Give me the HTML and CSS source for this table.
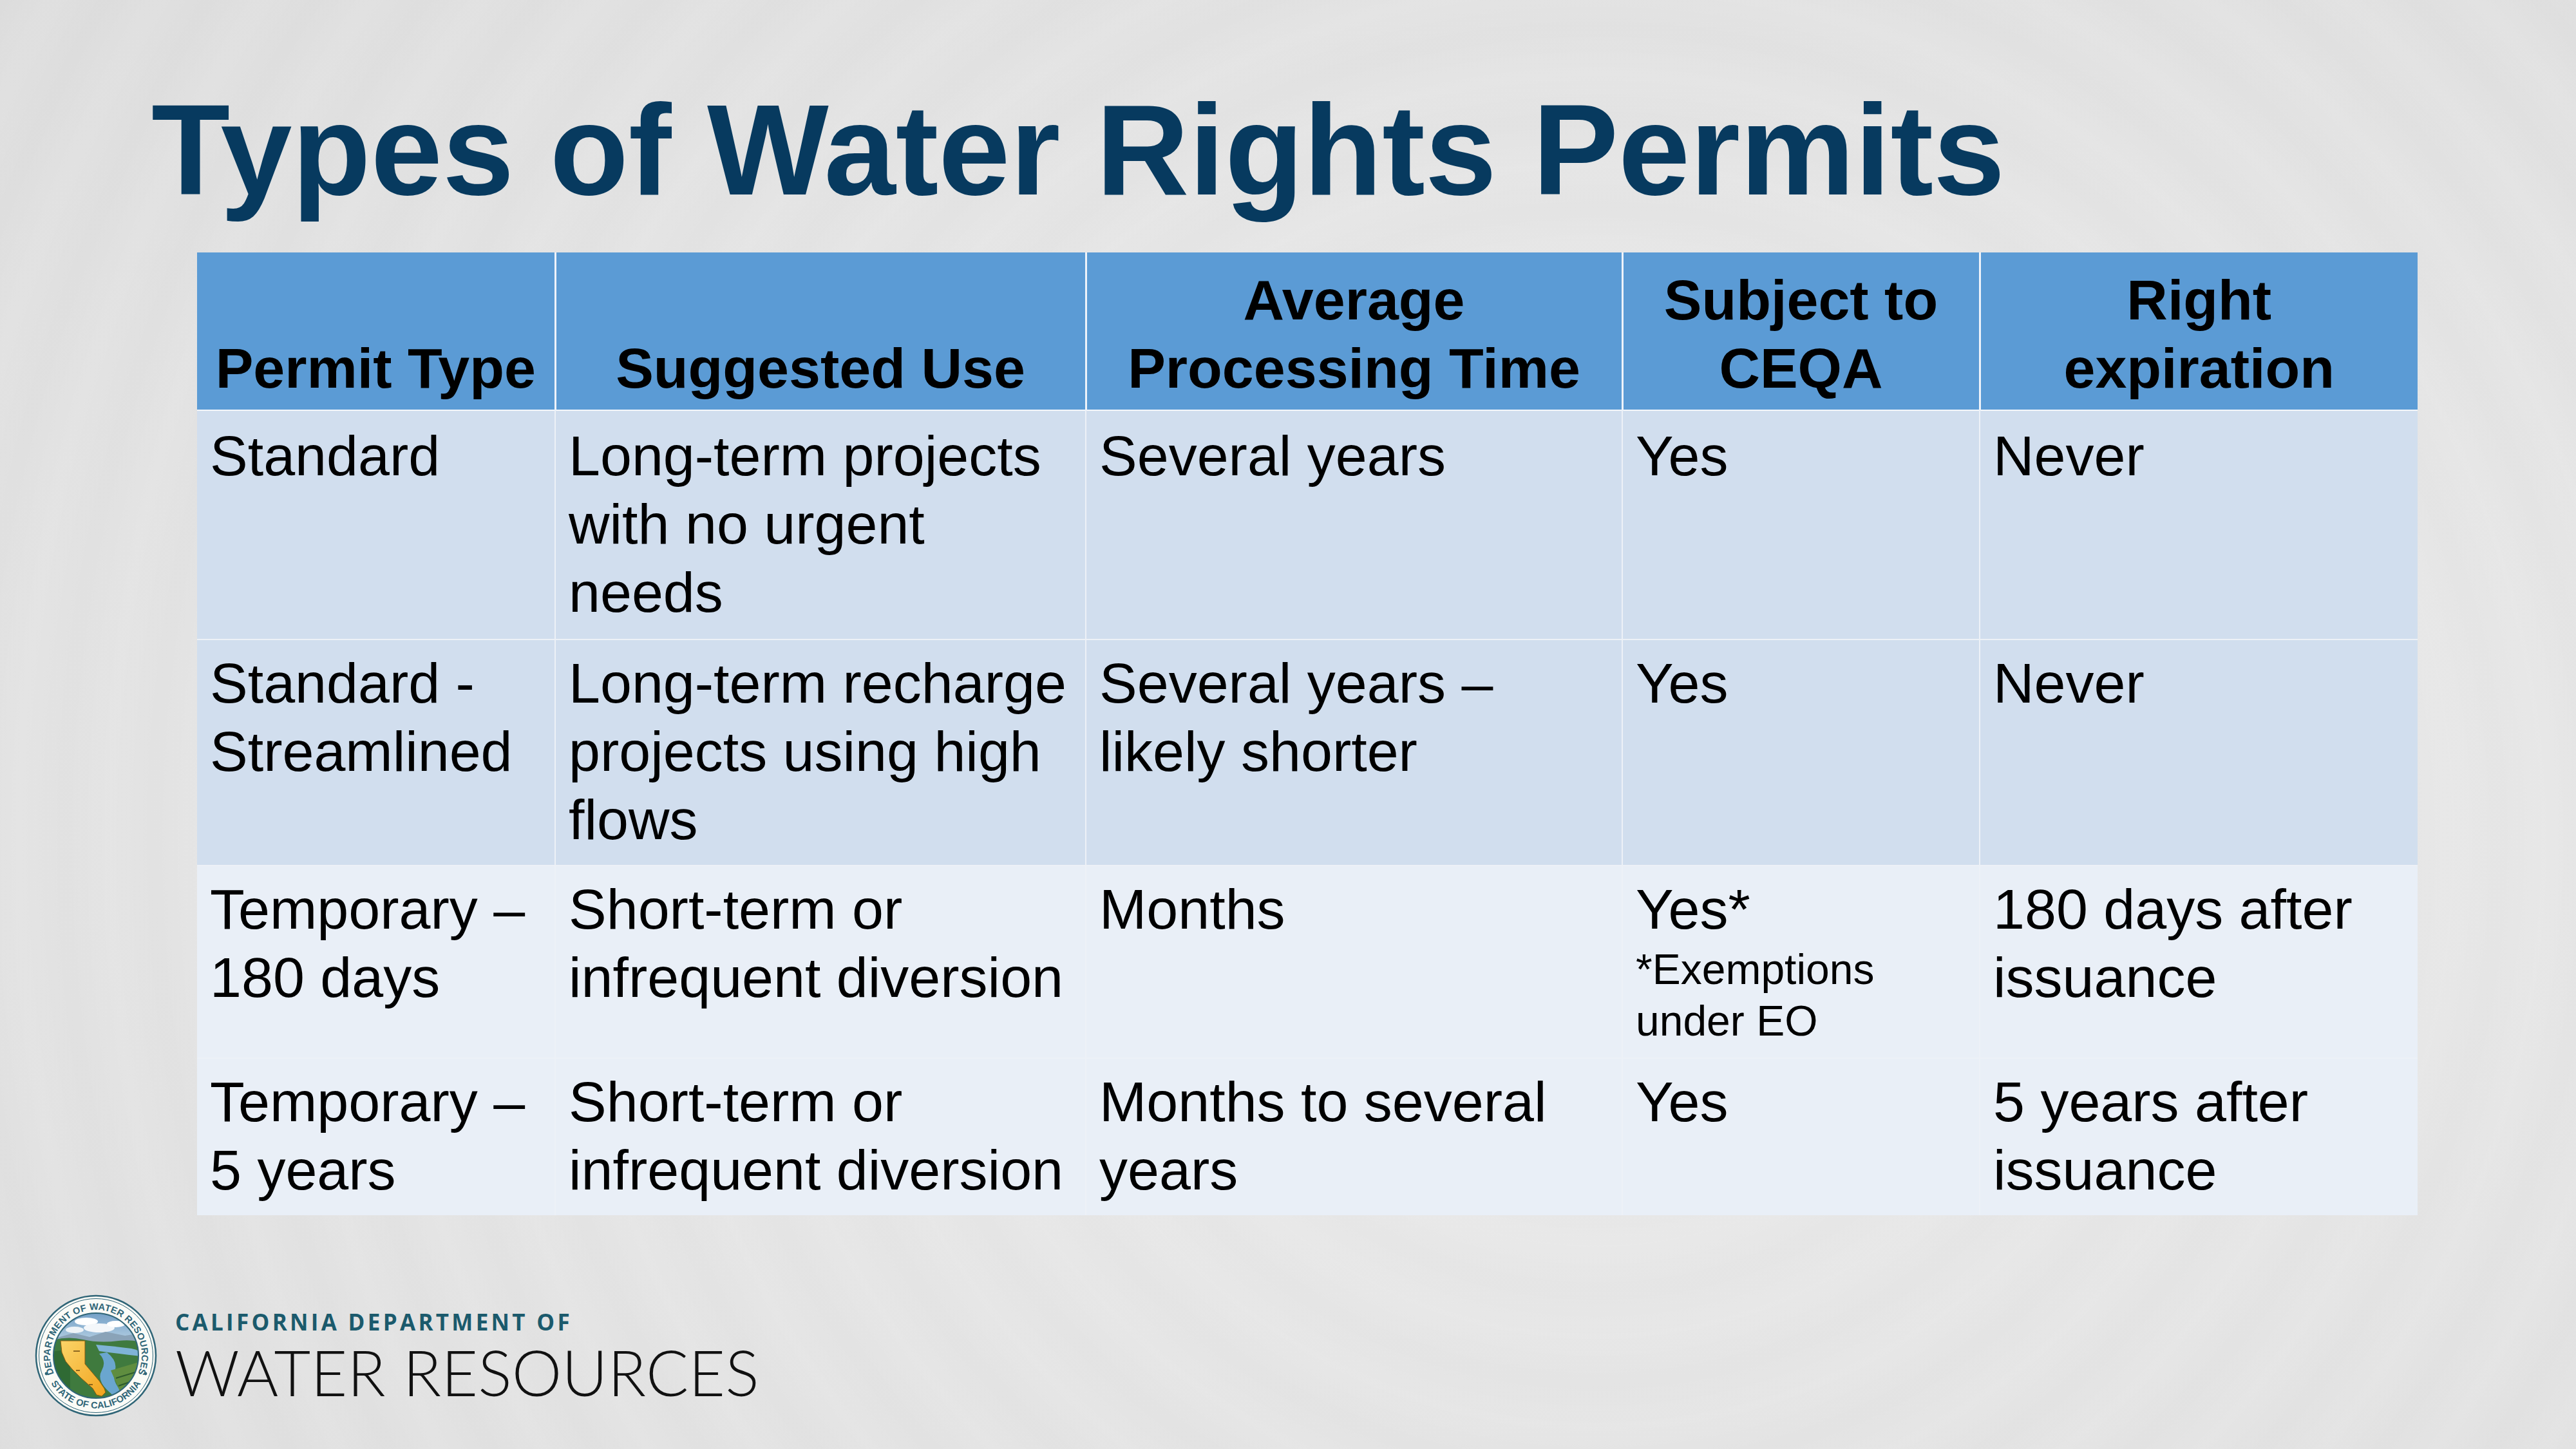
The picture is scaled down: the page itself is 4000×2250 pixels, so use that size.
FILE: index.html
```html
<!DOCTYPE html>
<html lang="en">
<head>
<meta charset="utf-8">
<title>Types of Water Rights Permits</title>
<link rel="stylesheet" href="styles.css">
</head>
<body>
<div class="slide">
  <h1 class="title">Types of Water Rights Permits</h1>
  <table class="permits">
    <colgroup>
      <col class="c1"><col class="c2"><col class="c3"><col class="c4"><col class="c5">
    </colgroup>
    <thead>
      <tr>
        <th>Permit Type</th>
        <th>Suggested Use</th>
        <th>Average Processing Time</th>
        <th>Subject to CEQA</th>
        <th>Right expiration</th>
      </tr>
    </thead>
    <tbody>
      <tr class="band first">
        <td>Standard</td>
        <td>Long-term projects with no urgent needs</td>
        <td>Several years</td>
        <td>Yes</td>
        <td>Never</td>
      </tr>
      <tr class="band">
        <td>Standard - Streamlined</td>
        <td>Long-term recharge projects using high flows</td>
        <td>Several years – likely shorter</td>
        <td>Yes</td>
        <td>Never</td>
      </tr>
      <tr class="light">
        <td>Temporary – 180 days</td>
        <td>Short-term or infrequent diversion</td>
        <td>Months</td>
        <td>Yes*<span class="note">*Exemptions under EO</span></td>
        <td>180 days after issuance</td>
      </tr>
      <tr class="light">
        <td>Temporary – 5 years</td>
        <td>Short-term or infrequent diversion</td>
        <td>Months to several years</td>
        <td>Yes</td>
        <td>5 years after issuance</td>
      </tr>
    </tbody>
  </table>
  <div class="footer">
    <svg class="seal" viewBox="0 0 190 190" aria-label="Department of Water Resources seal">
      <defs>
        <clipPath id="innerClip"><circle cx="95" cy="95" r="66"/></clipPath>
        <path id="arcTop" d="M 34.8 132.6 A 71 71 0 1 1 155.2 132.6"/>
        <path id="arcBot" d="M 13 95 A 82 82 0 0 0 177 95"/>
        <linearGradient id="sky" x1="0" y1="0" x2="0" y2="1">
          <stop offset="0" stop-color="#6f9cc4"/>
          <stop offset="1" stop-color="#c4dbea"/>
        </linearGradient>
        <linearGradient id="gold" x1="0" y1="0" x2="1" y2="1">
          <stop offset="0" stop-color="#fbd468"/>
          <stop offset="1" stop-color="#f2a41e"/>
        </linearGradient>
      </defs>
      <circle cx="95" cy="95" r="93" fill="#fbfbf7" stroke="#2f6577" stroke-width="2.5"/>
      <circle cx="95" cy="95" r="88.5" fill="none" stroke="#2f6577" stroke-width="1"/>
      <g clip-path="url(#innerClip)">
        <rect x="25" y="25" width="140" height="60" fill="url(#sky)"/>
        <ellipse cx="80" cy="42" rx="18" ry="6" fill="#ffffff"/>
        <ellipse cx="100" cy="52" rx="24" ry="7" fill="#f4f7fa"/>
        <ellipse cx="126" cy="46" rx="14" ry="5" fill="#ffffff"/>
        <ellipse cx="62" cy="55" rx="14" ry="5" fill="#eef3f7"/>
        <path d="M25 70 L60 60 L85 66 L110 58 L140 64 L165 60 L165 80 L25 80 Z" fill="#8aa3b8"/>
        <path d="M25 72 Q50 64 75 70 Q100 76 130 72 Q150 70 165 74 L165 165 L25 165 Z" fill="#3f7a3e"/>
        <path d="M95 78 Q120 80 150 84 Q160 86 165 90 L165 96 Q130 92 100 88 Z" fill="#7fb3d6"/>
        <path d="M100 92 Q112 104 104 118 Q96 132 112 148 L130 165 L150 165 Q118 140 124 120 Q130 104 112 90 Z" fill="#6aa6cf"/>
        <path d="M118 118 L165 104 L165 165 L138 165 Q128 140 118 118 Z" fill="#5f8d3f"/>
        <path d="M126 130 L165 118 M130 142 L165 130 M136 154 L165 144" stroke="#2e5a2c" stroke-width="2"/>
        <path d="M25 90 Q40 84 55 90 L55 165 L25 165 Z" fill="#2f6a34"/>
        <path d="M40 72 L78 72 L78 108 L100 134 L108 146 L110 152 L104 158 L96 156 L90 146 L72 130 L58 116 L48 104 L42 90 Z" fill="url(#gold)" stroke="#8a5a10" stroke-width="1"/>
        <path d="M60 88 L70 88 M64 118 L70 118 M84 140 L90 140" stroke="#6b4a12" stroke-width="1.5"/>
      </g>
      <circle cx="95" cy="95" r="66" fill="none" stroke="#2f6577" stroke-width="2"/>
      <text class="seal-text"><textPath href="#arcTop" startOffset="50%" text-anchor="middle">DEPARTMENT OF WATER RESOURCES</textPath></text>
      <text class="seal-text"><textPath href="#arcBot" startOffset="50%" text-anchor="middle">STATE OF CALIFORNIA</textPath></text>
      <circle cx="18" cy="123" r="2.4" fill="#2f6577"/>
      <circle cx="172" cy="123" r="2.4" fill="#2f6577"/>
    </svg>
    <div class="wordmark">
      <div class="dept">CALIFORNIA DEPARTMENT OF</div>
      <div class="water">WATER RESOURCES</div>
    </div>
  </div>
</div>
</body>
</html>
```
FILE: styles.css
```css
html, body {
  margin: 0;
  padding: 0;
}

body {
  width: 4000px;
  height: 2250px;
  overflow: hidden;
  font-family: "Liberation Sans", Arial, sans-serif;
  color: #000;
}

.slide {
  width: 4000px;
  height: 2250px;
  box-sizing: border-box;
  display: flex;
  flex-direction: column;
  background:
    repeating-radial-gradient(circle at 62% 58%, rgba(255,255,255,0) 0, rgba(255,255,255,0.10) 70px, rgba(255,255,255,0) 140px),
    radial-gradient(ellipse at 60% 55%, #ececec 0%, #e6e6e6 40%, #dcdcdc 100%);
}

.title {
  margin: 133px 0 0 235px;
  font-family: "Liberation Sans", Arial, sans-serif;
  font-weight: 700;
  font-size: 200px;
  line-height: 200px;
  color: #073a5f;
  letter-spacing: 0;
}

.permits {
  margin: 59px 0 0 306px;
  width: 3448px;
  table-layout: fixed;
  border-collapse: collapse;
  font-size: 88px;
  line-height: 106px;
}

.c1 { width: 556px; }
.c2 { width: 824px; }
.c3 { width: 833px; }
.c4 { width: 555px; }
.c5 { width: 680px; }

.permits th {
  background: #5b9bd5;
  font-weight: 700;
  text-align: center;
  vertical-align: bottom;
  padding: 21px 16px 11px;
  border-left: 3px solid #eef3fa;
  border-right: 3px solid #eef3fa;
  border-bottom: 2px solid #f4f7fb;
}

.permits th:first-child { border-left: none; }
.permits th:last-child { border-right: none; }

.permits td {
  vertical-align: top;
  text-align: left;
  padding: 14px 18px 17px 20px;
  border: 2px solid #edf1f7;
}

.permits .first td { padding-top: 17px; padding-bottom: 19px; }

.permits td:first-child { border-left: none; }
.permits td:last-child { border-right: none; }
.permits tbody tr:last-child td { border-bottom: none; }

.band td { background: #d1deee; }
.light td { background: #e9eff7; }

.note {
  display: block;
  font-size: 66px;
  line-height: 80px;
}

.footer {
  margin-top: auto;
  margin-bottom: 50px;
  margin-left: 54px;
  display: flex;
  align-items: center;
  gap: 28px;
}

.seal {
  width: 190px;
  height: 190px;
  display: block;
}

.seal-text {
  font-family: "Liberation Sans", Arial, sans-serif;
  font-weight: 700;
  font-size: 14.5px;
  fill: #2f6577;
  letter-spacing: 0.2px;
}

.wordmark {
  display: flex;
  flex-direction: column;
  gap: 6px;
  padding-top: 2px;
}

.dept {
  font-family: "Open Sans", "Liberation Sans", sans-serif;
  font-weight: 700;
  font-size: 35px;
  line-height: 42px;
  letter-spacing: 4.3px;
  color: #1b5a6c;
}

.water {
  font-family: "Lato", "Open Sans", sans-serif;
  font-weight: 300;
  font-size: 98px;
  line-height: 100px;
  letter-spacing: 0.1px;
  color: #111;
}
```
